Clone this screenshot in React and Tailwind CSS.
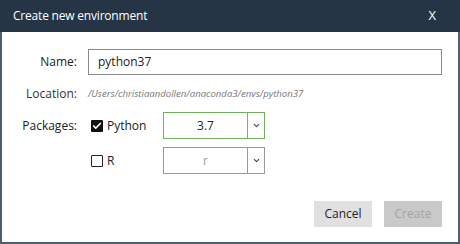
import { Check, ChevronDown } from "lucide-react";

function Select({ value, active, muted }) {
  return (
    <div
      className={`flex w-[102px] h-[27px] border bg-white ${
        active ? "border-[#6fae5a]" : "border-[#9a9a9a]"
      }`}
    >
      <div
        className={`flex-1 flex items-center justify-center text-[12px] ${
          muted ? "text-[#9a9a9a]" : "text-[#222]"
        }`}
      >
        {value}
      </div>
      <div className="w-[17px] border-l border-[#9a9a9a] flex items-center justify-center">
        <ChevronDown size={9} strokeWidth={3} className="text-[#444]" />
      </div>
    </div>
  );
}

export default function App() {
  return (
    <div
      className="w-[460px] h-[244px] flex flex-col bg-[#4c5f6d] text-[#222]"
      style={{ fontFamily: '"Open Sans", "Noto Sans", sans-serif' }}
    >
      {/* TITLE */}
      <div className="h-[32px] bg-[#253546] flex items-center justify-between pl-[13px] pr-[24px] text-white">
        <span className="text-[12px] tracking-[-0.2px]">Create new environment</span>
        <span className="text-[13px]">X</span>
      </div>

      {/* BODY */}
      <div className="flex-1 bg-white mx-[2px] mb-[2px] flex flex-col pt-[17px] pr-[16px]">
        <div className="flex items-center h-[26px]">
          <div className="w-[75px] text-right text-[12px]">Name:</div>
          <div className="ml-[11px] flex-1 h-[26px] border border-[#8a8a8a] flex items-center pl-[9px] text-[12px]">
            python37
          </div>
        </div>

        <div className="flex items-center mt-[7px] h-[24px]">
          <div className="w-[75px] text-right text-[12px] text-[#333]">Location:</div>
          <div className="ml-[11px] text-[9.6px] italic text-[#777]">
            /Users/christiaandollen/anaconda3/envs/python37
          </div>
        </div>

        <div className="flex items-center mt-[6px] h-[27px]">
          <div className="w-[75px] text-right text-[12px]">Packages:</div>
          <div className="ml-[14px] w-[72px] flex items-center gap-[4px]">
            <div className="w-[12px] h-[12px] bg-[#111] rounded-[1px] flex items-center justify-center">
              <Check size={10} strokeWidth={4} className="text-white" />
            </div>
            <span className="text-[12px]">Python</span>
          </div>
          <Select value="3.7" active />
        </div>

        <div className="flex items-center mt-[8px] h-[27px]">
          <div className="w-[75px]" />
          <div className="ml-[14px] w-[72px] flex items-center gap-[4px]">
            <div className="w-[12px] h-[12px] border-[1.5px] border-[#222] rounded-[1px]" />
            <span className="text-[12px]">R</span>
          </div>
          <Select value="r" muted />
        </div>

        <div className="flex justify-end gap-[12px] mt-[27px]">
          <button className="w-[58px] h-[26px] bg-[#e0e0e0] text-[12px] text-[#222]">
            Cancel
          </button>
          <button className="w-[58px] h-[26px] bg-[#c9c9c9] text-[12px] text-[#a3a3a3]">
            Create
          </button>
        </div>
      </div>
    </div>
  );
}
